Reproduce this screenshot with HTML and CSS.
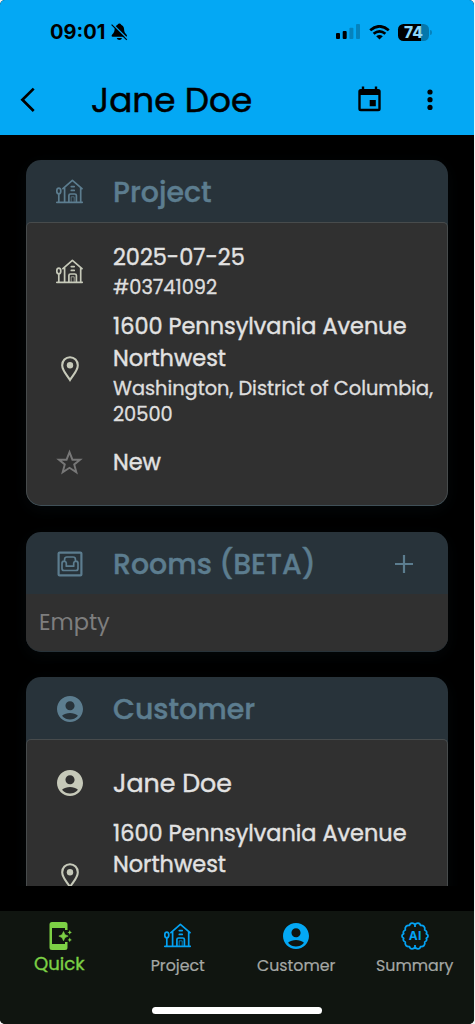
FILE: index.html
```html
<!DOCTYPE html>
<html lang="en">
<head>
<meta charset="utf-8">
<title>Jane Doe</title>
<link rel="stylesheet" href="styles.css">
</head>
<body>
<svg class="defs" width="0" height="0">
  <symbol id="house" viewBox="0 0 27 25">
    <g fill="none" stroke="currentColor" stroke-width="1.700" stroke-linecap="round" stroke-linejoin="round">
      <path d="M.8 23.300H26.300M6.900 9.600L16.400 1.400L26 9.600M8.600 8.800V23M24.700 8.800V23M12.900 23V16.600Q12.900 15 14.500 15H18.800Q20.400 15 20.400 16.600V23M15.300 7.600H18.200M15.300 11.400H18.200M2.800 15V23"/>
      <path d="M15.200 22.500V17.800H18.200V22.500" stroke-width=".7"/>
      <ellipse cx="2.800" cy="12" rx="2" ry="2.800"/>
    </g>
  </symbol>
  <symbol id="pin" viewBox="0 0 18 26">
    <path d="M9 1.200C4.600 1.200 1.200 4.700 1.200 9.200C1.200 14.400 5.600 18.600 9 24C12.400 18.600 16.800 14.400 16.800 9.200C16.800 4.700 13.400 1.200 9 1.200Z" fill="none" stroke="currentColor" stroke-width="2.100"/>
    <circle cx="9" cy="9.300" r="3.200" fill="currentColor"/>
  </symbol>
  <symbol id="person" viewBox="2 2 20 20">
    <path fill="currentColor" d="M12 2C6.480 2 2 6.480 2 12s4.480 10 10 10 10-4.480 10-10S17.520 2 12 2zm0 4c1.930 0 3.500 1.570 3.500 3.500S13.930 13 12 13s-3.500-1.570-3.500-3.500S10.070 6 12 6zm0 14c-2.030 0-4.430-.820-6.140-2.880C7.550 15.800 9.680 15 12 15s4.450.800 6.140 2.120C16.430 19.180 14.030 20 12 20z"/>
  </symbol>
</svg>
<div class="screen">
  <header class="top">
    <div class="status">
      <span class="clock">09:01</span>
      <svg class="bell" width="17" height="18" viewBox="0 0 17 18">
        <path d="M8.400.4C6.900.4 6.600 1.600 6.200 2C3.800 3 3.600 5.400 3.500 7.600C3.400 9.800 1 11.600.6 12.600Q.4 13.800 1.800 13.800H15Q16.300 13.800 16 12.600C15.600 11.400 13.300 10 13.200 7.600C13.100 5 12.800 3 10.500 2C10.100 1.600 9.900.4 8.400.4ZM5.700 15H11Q10.500 17 8.400 17T5.700 15Z"/>
        <path d="M1.700 1.200L16.800 16.200" stroke="#04a8f4" stroke-width="1.500"/>
        <path d="M.6 1.600L15.800 16.800" stroke="#000" stroke-width="1.200"/>
      </svg>
      <span class="fill"></span>
      <svg class="signal" width="25" height="16" viewBox="0 0 25 16">
        <rect x="0" y="9" width="4" height="6" rx="1"/><rect x="6.700" y="7" width="4" height="8" rx="1"/>
        <g fill="#0582bd"><rect x="13.400" y="3.700" width="4" height="11.300" rx="1"/><rect x="20" y="0" width="4" height="15" rx="1"/></g>
      </svg>
      <svg class="wifi" width="21" height="15" viewBox="0 0 21 15">
        <path d="M1.200 5.200Q10.500-2.600 19.800 5.200M4.600 8.700Q10.500 3.900 16.400 8.700" fill="none" stroke="#000" stroke-width="2.700"/>
        <path d="M7.200 11.200Q10.500 8.600 13.800 11.200L10.500 14.600Z"/>
      </svg>
      <span class="battery"><b>74</b></span><span class="tip"></span>
    </div>
    <div class="appbar">
      <svg class="back" width="16" height="26" viewBox="0 0 16 26"><path d="M13.700 1.600L2.400 12.800L13.700 24" fill="none" stroke="#000" stroke-width="2.700"/></svg>
      <h1>Jane Doe</h1>
      <svg class="calendar" width="23" height="26" viewBox="0 0 23 26"><path fill-rule="evenodd" d="M3.800.5H6.200V3H16.800V.5H19.200V3H20.200Q22.700 3 22.700 5.500V22.700Q22.700 25.200 20.200 25.200H2.800Q.3 25.200.3 22.700V5.500Q.3 3 2.800 3H3.800ZM2.700 9V22.800H20.300V9ZM11.700 14H17.800V20.200H11.700Z"/></svg>
      <svg class="more" width="6" height="22" viewBox="0 0 6 22"><circle cx="3" cy="3" r="2.600"/><circle cx="3" cy="10.700" r="2.600"/><circle cx="3" cy="18.400" r="2.600"/></svg>
    </div>
  </header>

  <main class="content">
    <section class="card">
      <div class="head"><svg class="icon house"><use href="#house"/></svg><h2>Project</h2></div>
      <div class="body framed">
        <div class="item">
          <svg class="icon house"><use href="#house"/></svg>
          <div><p class="main">2025-07-25</p><p class="sub">#03741092</p></div>
        </div>
        <div class="item address">
          <svg class="icon pin"><use href="#pin"/></svg>
          <div><p class="main">1600 Pennsylvania Avenue<br>Northwest</p><p class="sub">Washington, District of Columbia,<br>20500</p></div>
        </div>
        <div class="item state">
          <svg class="icon star" viewBox="0 0 24 24"><path d="M12 2.800L14.600 9.500H21.400L16.200 13.700L18.100 20.800L12 16.700L5.900 20.800L7.800 13.700L2.600 9.500H9.400Z" fill="none" stroke="currentColor" stroke-width="1.700"/></svg>
          <p class="main">New</p>
        </div>
      </div>
    </section>

    <section class="card rooms">
      <div class="head">
        <svg class="icon room" viewBox="0 0 26 26"><g fill="none" stroke="currentColor"><rect x="1.600" y="1.600" width="22.800" height="22.800" rx="1" stroke-width="2.200"/><path stroke-width="1.700" stroke-linejoin="round" d="M7.600 10V8.300Q7.600 6 10 6H16Q18.400 6 18.400 8.300V10M9.300 15.200H16.700V12Q17 10.200 18.900 10.200Q21.200 10.400 21 12.800V17.500Q21 19.500 19 19.500H7Q5 19.500 5 17.500V12.800Q4.800 10.400 7.100 10.200Q9 10.200 9.300 12Z"/></g></svg>
        <h2>Rooms (BETA)</h2>
        <svg class="plus" width="18" height="18" viewBox="0 0 18 18"><path d="M9 0V18M0 9H18" stroke="currentColor" stroke-width="2.200"/></svg>
      </div>
      <div class="body empty">Empty</div>
    </section>

    <section class="card">
      <div class="head"><svg class="icon person"><use href="#person"/></svg><h2>Customer</h2></div>
      <div class="body framed contact">
        <div class="item">
          <svg class="icon person"><use href="#person"/></svg>
          <p class="main name">Jane Doe</p>
        </div>
        <div class="item address">
          <svg class="icon pin"><use href="#pin"/></svg>
          <p class="main">1600 Pennsylvania Avenue<br>Northwest</p>
        </div>
      </div>
    </section>
  </main>

  <nav class="tabs">
    <a class="tab active">
      <svg width="24" height="28" viewBox="0 0 24 28"><path fill="currentColor" fill-rule="evenodd" d="M3 0H16Q18.500 0 18.500 2.500V8H16V6H3V22H16V20H18.500V25.500Q18.500 28 16 28H3Q.5 28 .5 25.500V2.500Q.5 0 3 0ZM20.800 8L21.500 9.700L23 10.400L21.500 11.100L20.800 12.800L20 11.100L18.500 10.400L20 9.700ZM20.800 15.500L21.500 17.200L23 17.900L21.500 18.600L20.800 20.300L20 18.600L18.500 17.900L20 17.200Z"/><path d="M14.500 9.500L16 12.700L19.200 14.100L16 15.600L14.500 18.800L13 15.600L9.800 14.100L13 12.700Z" fill="currentColor" stroke="currentColor" stroke-width=".6"/></svg>
      <span>Quick</span>
    </a>
    <a class="tab"><svg class="house"><use href="#house"/></svg><span>Project</span></a>
    <a class="tab"><svg class="person"><use href="#person"/></svg><span>Customer</span></a>
    <a class="tab">
      <svg class="brain" width="28" height="28" viewBox="0 0 28 28"><path fill="none" stroke="currentColor" stroke-width="1.800" stroke-linejoin="round" d="M14 3C12.700.4 9.200.4 8.500 3.400C5.600 3 3.600 5 4.300 8C2.200 8.700 1.900 10.500 2.700 11.800C.4 13 .4 15 2.700 16.200C1.900 17.500 2.200 19.300 4.300 20C3.600 23 5.600 25 8.500 24.600C9.200 27.600 12.700 27.600 14 25C15.300 27.600 18.800 27.600 19.500 24.600C22.400 25 24.400 23 23.700 20C25.800 19.300 26.100 17.500 25.300 16.200C27.600 15 27.600 13 25.300 11.800C26.100 10.500 25.800 8.700 23.700 8C24.400 5 22.400 3 19.500 3.400C18.800.4 15.300.4 14 3ZM14 3V5M14 23V25"/><text x="14.300" y="18.300" text-anchor="middle" class="ai">AI</text></svg>
      <span>Summary</span>
    </a>
    <i class="homebar"></i>
  </nav>
</div>
</body>
</html>
```
FILE: styles.css
```css
* { box-sizing: border-box; }
body { margin: 0; background: #f4f4f4; font-family: Poppins, Inter, sans-serif; }
h1, h2, p { margin: 0; white-space: nowrap; }
svg { flex: none; display: block; }
.defs { position: absolute; }
.screen { width: 474px; height: 1024px; display: flex; flex-direction: column; background: #000; border-radius: 5px; overflow: hidden; }

.top { height: 135px; background: #04a8f4; color: #000; flex: none; }
.status { height: 64px; display: flex; align-items: center; padding: 0 42px 0 50px; }
.clock { font: 700 20px/24px Inter, sans-serif; width: 56px; white-space: nowrap; }
.bell { margin-left: 5px; }
.fill { flex: 1; }
.wifi { margin: 0 8px; }
.battery { width: 31px; height: 17px; border-radius: 5.500px; background: linear-gradient(90deg, #000 74%, #0577ac 74%); color: #8fd8fb; text-align: center; font: 700 15.500px/17px Inter, sans-serif; }
.battery b { font-weight: 800; }
.tip { width: 2px; height: 5px; margin-left: 1px; border-radius: 0 2px 2px 0; background: #0582bd; }
.appbar { height: 71px; display: flex; align-items: center; padding: 0 41px 0 20px; }
.back { margin-right: 55px; }
h1 { flex: 1; font-size: 34.300px; font-weight: 400; line-height: 42px; -webkit-text-stroke: .5px currentColor; }
.calendar { margin: -2px 46px 0 0; }
.more { margin-top: 1px; }

.content { height: 751px; overflow: hidden; padding: 25px 26px 0; display: flex; flex-direction: column; gap: 26px; flex: none; }
.card { flex: none; background: #28333a; border-radius: 15px; box-shadow: 0 4px 16px #09141866; overflow: hidden; }
.rooms + .card { margin-top: -1px; }
.head { height: 62px; display: flex; align-items: center; color: #5c7d8f; padding: 2px 35px 0 0; }
.icon { width: 27px; height: 25px; margin: 0 30px; }
.head .icon.house { margin-top: -2px; }
.icon.pin { width: 18px; height: 26px; margin: 0 34.500px; }
.icon.person { width: 26px; height: 26px; margin: 0 30.500px; }
.icon.room { width: 26px; height: 26px; margin: 0 30.500px; }
.icon.star { width: 27px; height: 27px; color: #777; }
h2 { flex: 1; font-size: 28.400px; font-weight: 500; line-height: 40px; margin-top: -1px; -webkit-text-stroke: .4px currentColor; }
.plus { width: 18px; }
.body { background: #303030; }
.framed { height: 284px; padding: 19px 0 0; border: 1px solid #474b4c; border-bottom-color: #405058; border-radius: 5px 5px 15px 15px; }
.item { display: flex; align-items: center; color: #c6c9b9; }
.framed .item { margin-left: -1px; }
.item.address { margin-top: 10.300px; }
.item.state { margin-top: 19px; }
.main { color: #e2e2e2; font-size: 22.400px; font-weight: 400; line-height: 31.700px; -webkit-text-stroke: .4px currentColor; }
.sub { color: #dedede; font-size: 19.350px; font-weight: 400; line-height: 26px; margin-top: 1.200px; -webkit-text-stroke: .35px currentColor; }
.rooms { height: 120px; border-bottom: 1px solid #28333a; }
.empty { height: 58px; padding-left: 13px; color: #7e7e7e; font-size: 22.500px; line-height: 56px; }
.contact { padding-top: 23px; }
.name { font-size: 25.300px; line-height: 40px; }
.contact .address { margin-top: 14.500px; height: 116.700px; }
.contact .address .main { align-self: flex-start; }

.tabs { margin-top: 25px; height: 113px; background: #101510; display: grid; grid-template-columns: repeat(4, 1fr); position: relative; flex: none; color: #04a2f3; }
.tab { display: flex; flex-direction: column; align-items: center; padding-top: 11px; }
.tab span { color: #a5a8a5; font-size: 15.800px; line-height: 24px; margin-top: 4px; white-space: nowrap; -webkit-text-stroke: .2px currentColor; }
.tab .house { width: 27px; height: 25px; margin: 1px 0 2px; }
.tab .person { width: 26px; height: 26px; margin: 1px 0; color: #04a8f4; }
.tab.active { color: #7dd145; }
.tab.active svg { margin-left: 4px; }
.tab.active span { color: #7dd145; font-size: 18.100px; margin-top: 2px; -webkit-text-stroke: .35px currentColor; }
.ai { font: 700 12px Inter, sans-serif; fill: currentColor; letter-spacing: .5px; }
.homebar { position: absolute; left: 152px; bottom: 10px; width: 170px; height: 7px; border-radius: 4px; background: #fff; }
```
